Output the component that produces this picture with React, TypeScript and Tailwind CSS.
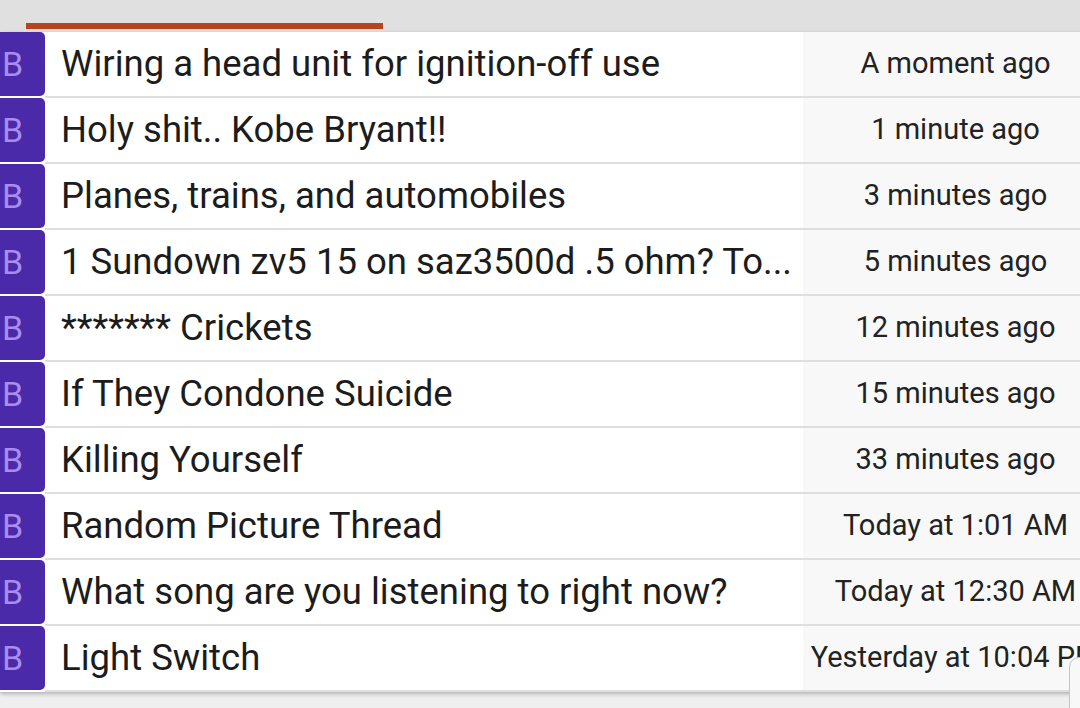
import React from "react";

type Thread = { title: string; time: string };

const threads: Thread[] = [
  { title: "Wiring a head unit for ignition-off use", time: "A moment ago" },
  { title: "Holy shit.. Kobe Bryant!!", time: "1 minute ago" },
  { title: "Planes, trains, and automobiles", time: "3 minutes ago" },
  { title: "1 Sundown zv5 15 on saz3500d .5 ohm? To...", time: "5 minutes ago" },
  { title: "******* Crickets", time: "12 minutes ago" },
  { title: "If They Condone Suicide", time: "15 minutes ago" },
  { title: "Killing Yourself", time: "33 minutes ago" },
  { title: "Random Picture Thread", time: "Today at 1:01 AM" },
  { title: "What song are you listening to right now?", time: "Today at 12:30 AM" },
  { title: "Light Switch", time: "Yesterday at 10:04 PM" },
];

function ThreadRow({ t }: { t: Thread }) {
  return (
    <div className="flex h-[66px] bg-white">
      <div className="mb-[2px] flex w-[45px] shrink-0 items-center rounded-r-[5px] bg-[#4a2aa8] pl-[2px] text-[34px] leading-none text-[#a98cf0]">
        B
      </div>
      <div className="flex min-w-0 flex-1 border-b-2 border-[#dedede]">
        <div className="flex min-w-0 flex-1 items-center pl-[16px] pr-[6px]">
          <span className="truncate text-[36.5px] leading-[1.3] text-[#1c1c1c]">{t.title}</span>
        </div>
        <div className="flex w-[305px] shrink-0 items-center justify-center bg-[#f8f8f8]">
          <span className="whitespace-nowrap text-[29px] leading-[1.3] text-[#222]">{t.time}</span>
        </div>
      </div>
    </div>
  );
}

export default function App() {
  return (
    <div
      className="relative h-[708px] w-[1080px] overflow-hidden bg-[#efefef]"
      style={{ fontFamily: "Roboto, 'Noto Sans', sans-serif" }}
    >
      <div className="h-[32px] bg-[#e0e0e0] pl-[26px] pt-[23px]">
        <div className="h-[6px] w-[357px] bg-[#b8441f]" />
      </div>
      <div className="w-[1108px] shadow-[0_2px_4px_rgba(0,0,0,0.25)]">
        {threads.map((t) => (
          <ThreadRow key={t.title} t={t} />
        ))}
      </div>
      {/* floating scroll button, mostly off the right edge */}
      <div className="absolute left-[1069px] top-[657px] h-[90px] w-[48px] rounded-[10px] border border-[#c4c4c4] bg-[#f8f8f8]" />
    </div>
  );
}
